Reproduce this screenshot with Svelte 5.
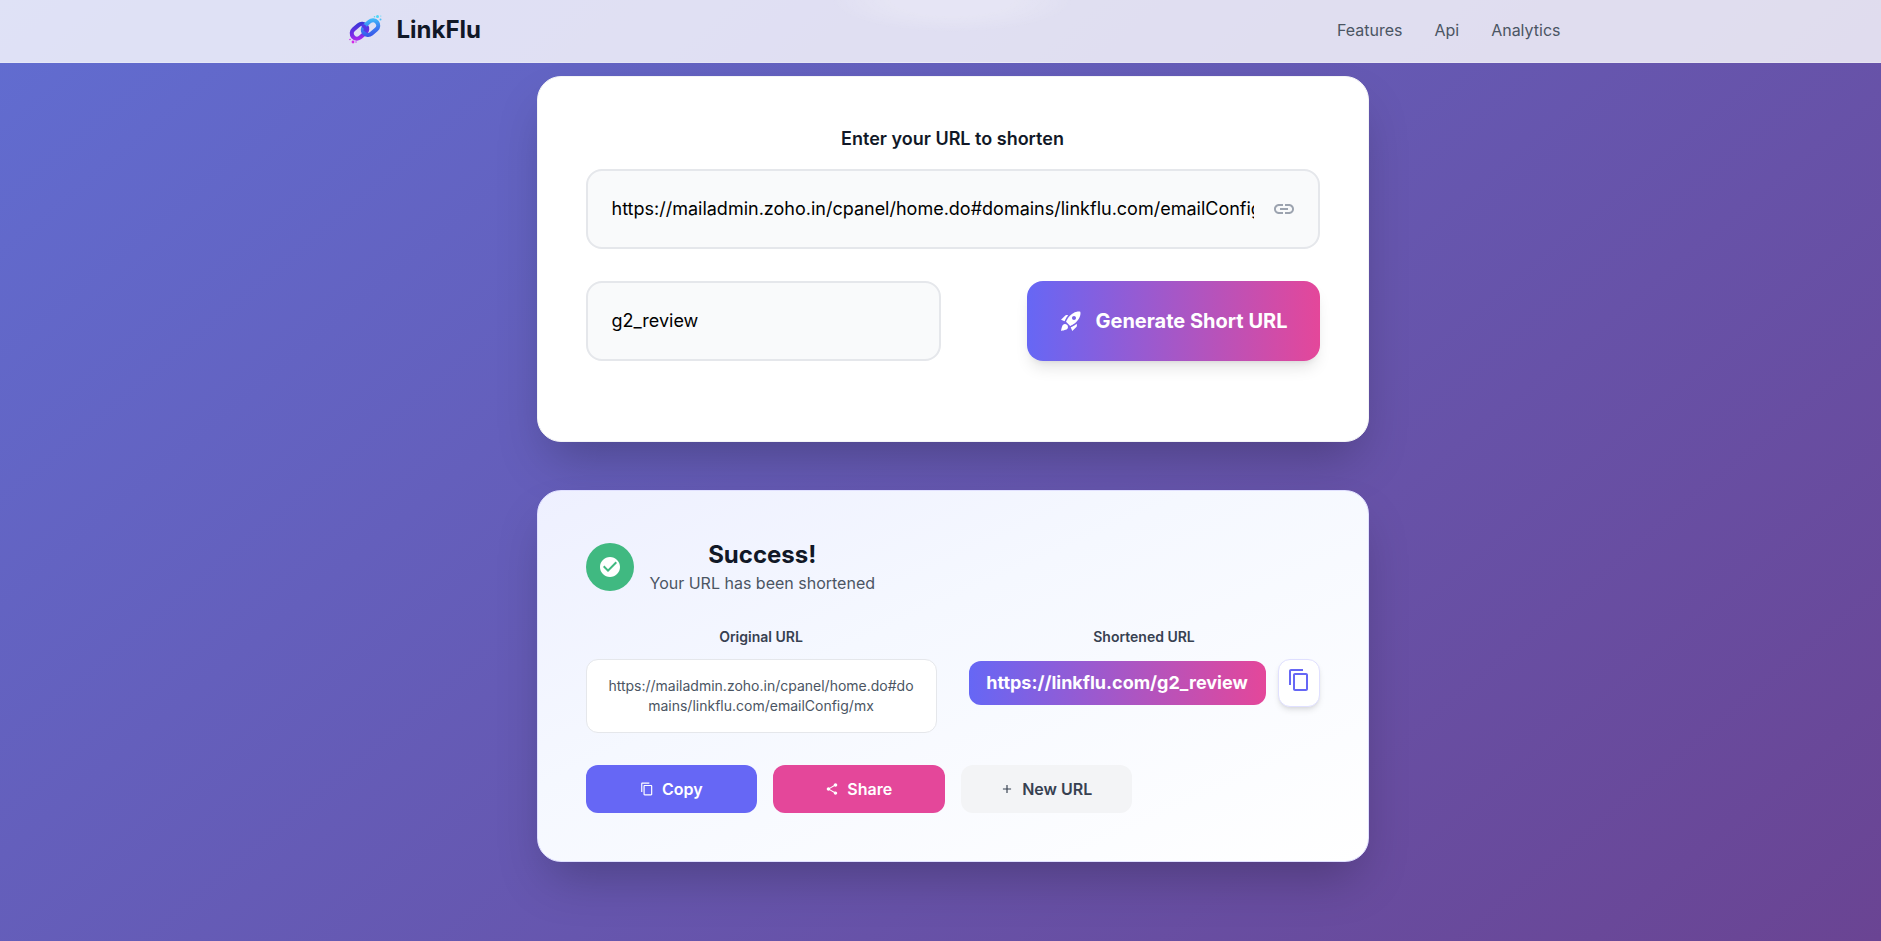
<script>
	const nav = ["Features", "Api", "Analytics"];

	const icons = {
		link: "M3.9 12c0-1.71 1.39-3.1 3.1-3.1h4V7H7c-2.76 0-5 2.24-5 5s2.24 5 5 5h4v-1.9H7c-1.71 0-3.1-1.39-3.1-3.1zM8 13h8v-2H8v2zm9-6h-4v1.9h4c1.71 0 3.1 1.39 3.1 3.1s-1.39 3.1-3.1 3.1h-4V17h4c2.76 0 5-2.24 5-5s-2.24-5-5-5z",
		rocket: "M9.19 6.35c-2.04 2.29-3.44 5.58-3.57 5.89L2 10.69l4.05-4.05c.47-.47 1.15-.68 1.81-.55l1.33.26zM11.17 17s3.74-1.55 5.89-3.7c5.4-5.4 4.5-9.62 4.21-10.57-.95-.3-5.17-1.19-10.57 4.21C8.55 9.09 7 12.83 7 12.83L11.17 17zm6.48-2.19c-2.29 2.04-5.58 3.44-5.89 3.57L13.31 22l4.05-4.05c.47-.47.68-1.15.55-1.81l-.26-1.33zM9 18c0 .83-.34 1.58-.88 2.12C6.94 21.3 2 22 2 22s.7-4.94 1.88-6.12A2.996 2.996 0 0 1 9 18zm4-9c0-1.1.9-2 2-2s2 .9 2 2-.9 2-2 2-2-.9-2-2z",
		check: "M12 2C6.48 2 2 6.48 2 12s4.48 10 10 10 10-4.48 10-10S17.52 2 12 2zM10 17l-5-5 1.41-1.41L10 14.17l7.59-7.59L19 8l-9 9z",
		copy: "M16 1H4c-1.1 0-2 .9-2 2v14h2V3h12V1zm3 4H8c-1.1 0-2 .9-2 2v14c0 1.1.9 2 2 2h11c1.1 0 2-.9 2-2V7c0-1.1-.9-2-2-2zm0 16H8V7h11v14z",
		share: "M18 16.08c-.76 0-1.44.3-1.96.77L8.91 12.7c.05-.23.09-.46.09-.7s-.04-.47-.09-.7l7.05-4.11c.54.5 1.25.81 2.04.81 1.66 0 3-1.34 3-3s-1.34-3-3-3-3 1.34-3 3c0 .24.04.47.09.7L8.04 9.81C7.5 9.31 6.79 9 6 9c-1.66 0-3 1.34-3 3s1.34 3 3 3c.79 0 1.5-.31 2.04-.81l7.12 4.16c-.05.21-.08.43-.08.65 0 1.61 1.31 2.92 2.92 2.92 1.61 0 2.92-1.31 2.92-2.92s-1.31-2.92-2.92-2.92z",
		add: "M19 13h-6v6h-2v-6H5v-2h6V5h2v6h6v2z",
	};

	let url = "https://mailadmin.zoho.in/cpanel/home.do#domains/linkflu.com/emailConfig/mx";
	let alias = "g2_review";

	let original = url;
	let shortened = "https://linkflu.com/" + alias;

	function generate() {
		original = url;
		shortened = "https://linkflu.com/" + alias;
	}

	function copy() {
		navigator.clipboard?.writeText(shortened);
	}

	function share() {
		navigator.share?.({ url: shortened });
	}

	function reset() {
		url = "";
		alias = "";
	}
</script>

<div class="page">
	<header>
		<div class="bar">
			<a class="brand" href="/">
				<svg class="logo" viewBox="0 0 40 40" fill="none" aria-hidden="true">
					<defs>
						<linearGradient id="low" x1="6" y1="32" x2="18" y2="14" gradientUnits="userSpaceOnUse">
							<stop offset="0" stop-color="#d92bf0" />
							<stop offset="0.5" stop-color="#7a2be8" />
							<stop offset="1" stop-color="#3a36d8" />
						</linearGradient>
						<linearGradient id="high" x1="20" y1="28" x2="32" y2="10" gradientUnits="userSpaceOnUse">
							<stop offset="0" stop-color="#3346e4" />
							<stop offset="0.5" stop-color="#3d7bf2" />
							<stop offset="1" stop-color="#3fc4fa" />
						</linearGradient>
					</defs>
					<rect x="6" y="16" width="17" height="10.400" rx="5.200" transform="rotate(-41 14.500 21.200)" stroke="url(#low)" stroke-width="4.200" />
					<rect x="17" y="12.400" width="17" height="10.400" rx="5.200" transform="rotate(-41 25.500 17.600)" stroke="url(#high)" stroke-width="4.200" />
					<path d="M17 15.500c3 .5 4.500 3 3 6" stroke="#5338e6" stroke-width="3.500" />
					<circle cx="32.500" cy="6.500" r="1.500" fill="#4dd6f7" />
					<circle cx="35.500" cy="9.500" r="1" fill="#4dc0fa" />
					<circle cx="29.500" cy="6.800" r=".8" fill="#4dd6f7" />
					<circle cx="35.800" cy="6" r=".6" fill="#4dd6f7" />
					<circle cx="8" cy="32" r="1.400" fill="#d42be8" />
					<circle cx="5" cy="29.500" r=".8" fill="#d42be8" />
					<circle cx="11" cy="32" r=".7" fill="#c02be8" />
				</svg>
				<span>LinkFlu</span>
			</a>
			<nav>
				{#each nav as item}
					<a href={"#" + item.toLowerCase()}>{item}</a>
				{/each}
			</nav>
		</div>
	</header>

	<main>
		<form class="card" on:submit|preventDefault={generate}>
			<label class="title" for="url">Enter your URL to shorten</label>
			<div class="field">
				<input id="url" class="long" type="text" bind:value={url} />
				<svg class="icon" viewBox="0 0 24 24" aria-hidden="true"><path d={icons.link} /></svg>
			</div>
			<div class="row">
				<input type="text" aria-label="Custom alias" bind:value={alias} />
				<button class="generate" type="submit">
					<svg class="icon" viewBox="0 0 24 24" aria-hidden="true"><path d={icons.rocket} /></svg>
					Generate Short URL
				</button>
			</div>
		</form>

		<section class="card result">
			<div class="success">
				<div class="badge">
					<svg class="icon" viewBox="0 0 24 24" aria-hidden="true"><path d={icons.check} /></svg>
				</div>
				<div>
					<h2>Success!</h2>
					<p>Your URL has been shortened</p>
				</div>
			</div>

			<div class="urls">
				<div>
					<h3>Original URL</h3>
					<div class="original">{original}</div>
				</div>
				<div>
					<h3>Shortened URL</h3>
					<div class="short">
						<a href={shortened}>{shortened}</a>
						<button class="copy-icon" type="button" aria-label="Copy short URL" on:click={copy}>
							<svg class="icon" viewBox="0 0 24 24" aria-hidden="true"><path d={icons.copy} /></svg>
						</button>
					</div>
				</div>
			</div>

			<div class="actions">
				<button class="copy" type="button" on:click={copy}>
					<svg viewBox="0 0 24 24" aria-hidden="true"><path d={icons.copy} /></svg>
					Copy
				</button>
				<button class="share" type="button" on:click={share}>
					<svg viewBox="0 0 24 24" aria-hidden="true"><path d={icons.share} /></svg>
					Share
				</button>
				<button class="new" type="button" on:click={reset}>
					<svg viewBox="0 0 24 24" aria-hidden="true"><path d={icons.add} /></svg>
					New URL
				</button>
			</div>
		</section>
	</main>
</div>

<style>
	:global(body) {
		margin: 0;
	}

	* {
		box-sizing: border-box;
	}

	.page {
		--indigo: #6667f5;
		--pink: #e4479a;
		--gradient: linear-gradient(to right, var(--indigo), var(--pink));
		min-height: 100vh;
		font-family: Inter, sans-serif;
		font-size: 16px;
		line-height: 24px;
		color: #111827;
		background: linear-gradient(140deg, #616dd1, #6a4493);
	}

	header {
		position: sticky;
		top: 0;
		z-index: 1;
		padding-left: 24px;
		background:
			radial-gradient(120px 32px at calc(50% + 12px) 0, rgba(255, 255, 255, 0.2) 50%, transparent),
			rgba(255, 255, 255, 0.8);
		border-bottom: 1px solid rgba(255, 255, 255, 0.2);
	}

	.bar {
		display: flex;
		align-items: center;
		justify-content: space-between;
		max-width: 1280px;
		height: 62px;
		margin: 0 auto;
		padding: 0 32px 2px;
	}

	.brand {
		display: flex;
		align-items: center;
		gap: 12px;
		font-size: 24px;
		font-weight: 700;
		line-height: 32px;
		color: #111827;
		text-decoration: none;
	}

	.logo {
		width: 40px;
		height: 40px;
	}

	nav {
		display: flex;
		gap: 32px;
	}

	nav a {
		color: #4b5563;
		text-decoration: none;
	}

	main {
		display: grid;
		gap: 48px;
		padding: 13px 0 79px 24px;
	}

	.card {
		width: 100%;
		max-width: 832px;
		margin: 0 auto;
		padding: 48px;
		background: #fff;
		border: 1px solid #f3f4f6;
		border-radius: 24px;
		box-shadow: 0 25px 50px -12px rgba(0, 0, 0, 0.25);
	}

	.title {
		display: block;
		margin-bottom: 16px;
		font-size: 18px;
		font-weight: 600;
		line-height: 28px;
		text-align: center;
	}

	.field {
		position: relative;
		margin-bottom: 32px;
	}

	.icon {
		display: block;
		flex: none;
		width: 24px;
		height: 24px;
		fill: currentColor;
	}

	.field .icon {
		position: absolute;
		top: 28px;
		right: 24px;
		color: #9ca3af;
	}

	input {
		display: block;
		width: 100%;
		height: 80px;
		padding: 0 24px 2px;
		font: inherit;
		font-size: 18px;
		color: #000;
		background: #f9fafb;
		border: 2px solid #e5e7eb;
		border-radius: 16px;
		outline: none;
	}

	input:focus {
		border-color: var(--indigo);
	}

	.long {
		padding-right: 64px;
	}

	.row {
		display: grid;
		grid-template-columns: 1fr 1fr;
		gap: 24px;
		margin-bottom: 32px;
	}

	button {
		display: flex;
		align-items: center;
		justify-content: center;
		gap: 8px;
		padding: 0;
		font: inherit;
		font-weight: 600;
		color: #fff;
		border: none;
		border-radius: 12px;
		cursor: pointer;
	}

	.generate {
		justify-self: end;
		gap: 12px;
		padding: 0 32px;
		font-size: 20px;
		font-weight: 700;
		white-space: nowrap;
		background: var(--gradient);
		border-radius: 16px;
		box-shadow:
			0 10px 15px -3px rgba(0, 0, 0, 0.1),
			0 4px 6px -4px rgba(0, 0, 0, 0.1);
	}

	.result {
		background: linear-gradient(to bottom right, #eef0ff, #f5f8ff 40%, #fff);
		border-color: #e0e0ff;
	}

	.success {
		display: flex;
		align-items: center;
		gap: 16px;
		margin-bottom: 32px;
		text-align: center;
	}

	.badge {
		display: grid;
		place-items: center;
		width: 48px;
		height: 48px;
		color: #fff;
		background: #40b981;
		border-radius: 50%;
	}

	h2,
	h3,
	p {
		margin: 0;
	}

	h2 {
		font-size: 24px;
		font-weight: 700;
		line-height: 32px;
	}

	p {
		color: #4b5563;
	}

	.urls {
		display: grid;
		grid-template-columns: 1fr 1fr;
		gap: 32px;
		margin-bottom: 32px;
		text-align: center;
	}

	h3 {
		margin-bottom: 12px;
		font-size: 14px;
		font-weight: 600;
		line-height: 20px;
		color: #374151;
	}

	.original {
		padding: 16px;
		font-size: 14px;
		line-height: 20px;
		color: #4b5563;
		word-break: break-all;
		background: #fff;
		border: 1px solid #e5e7eb;
		border-radius: 12px;
	}

	.short {
		display: flex;
		align-items: center;
		gap: 12px;
	}

	.short a {
		flex: 1;
		padding: 8px 16px;
		font-size: 18px;
		font-weight: 700;
		line-height: 28px;
		color: #fff;
		text-decoration: none;
		background: var(--gradient);
		border-radius: 12px;
	}

	.copy-icon {
		padding: 8px 8px 14px;
		color: var(--indigo);
		background: #fff;
		border: 1px solid #e0e0ff;
		box-shadow: 0 4px 6px -1px rgba(0, 0, 0, 0.1), 0 2px 4px -2px rgba(0, 0, 0, 0.1);
	}

	.actions {
		display: grid;
		grid-template-columns: repeat(4, 1fr);
		gap: 16px;
	}

	.actions button {
		height: 48px;
	}

	.actions svg {
		width: 14px;
		height: 14px;
		fill: currentColor;
	}

	.copy {
		background: var(--indigo);
	}

	.share {
		background: var(--pink);
	}

	.new {
		color: #374151;
		background: #f3f4f6;
	}
</style>
